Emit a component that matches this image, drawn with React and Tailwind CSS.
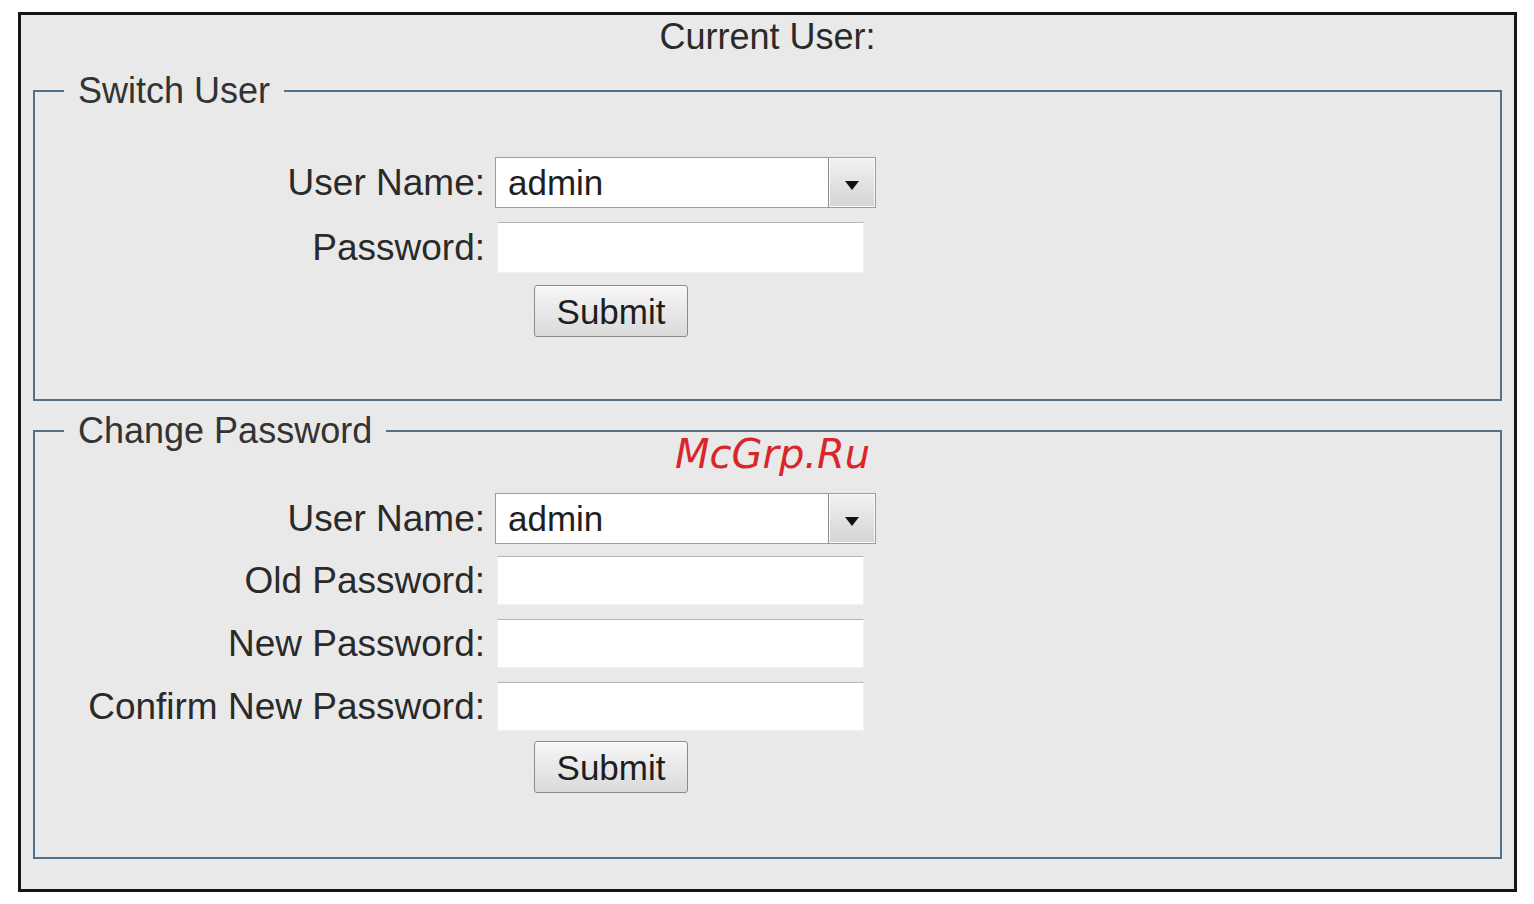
const font = { fontFamily: '"Liberation Sans", Arial, sans-serif' };

const Select = ({ value }) => (
  <div className="flex h-[51px] w-[381px] items-stretch border border-[#9c9c9c] bg-white">
    <div className="flex flex-1 items-center pl-[12px] text-[35px] leading-none text-[#1e1e1e]">{value}</div>
    <div className="flex w-[47px] items-center justify-center border-l border-[#8d8d8d] bg-gradient-to-b from-[#f2f2f2] to-[#d4d4d4] shadow-[inset_0_0_0_1px_#fafafa]">
      <svg width="18" height="11" viewBox="0 0 18 11" className="mt-[6px]">
        <path d="M2 1 L16 1 L9 10 Z" fill="#111" />
      </svg>
    </div>
  </div>
);

const TextInput = ({ h = 'h-[51px]' }) => (
  <div className={`${h} ml-[2px] w-[367px] border border-[#f1f1f1] border-t-[#b5b5b5] bg-white`} />
);

const SubmitButton = () => (
  <button className="ml-[39px] flex h-[52px] w-[154px] items-center justify-center rounded-[3px] border border-[#8b8b8b] bg-gradient-to-b from-[#f7f7f7] to-[#dadada] text-[35px] leading-none text-[#1e1e1e] shadow-[inset_0_1px_0_#ffffff]">
    Submit
  </button>
);

const Row = ({ label, children, className = '' }) => (
  <div className={`flex items-center ${className}`}>
    <label className="w-[460px] pr-[10px] text-right text-[37px] leading-none text-[#2a2a2a]">{label}</label>
    {children}
  </div>
);

const Fieldset = ({ legend, children, className = '' }) => (
  <fieldset className={`border-2 border-[#51708a] ${className}`}>
    <legend className="ml-[29px] px-[14px] text-[36px] leading-[40px] text-[#333]">{legend}</legend>
    {children}
  </fieldset>
);

export default function App() {
  return (
    <div className="relative min-h-[904px] w-[1534px] bg-white" style={font}>
      <div className="ml-[18px] w-[1499px] pt-[12px]">
        <div className="border-[3px] border-[#161616] bg-[#e9e9e9] px-[12px] pb-[30px] pt-[2px]">
          <div className="text-center text-[36px] leading-[40px] text-[#2a2a2a]">Current User:</div>

          <Fieldset legend="Switch User" className="mt-[14px] pb-[62px] pt-[46px]">
            <Row label="User Name:">
              <Select value="admin" />
            </Row>
            <Row label="Password:" className="mt-[14px]">
              <TextInput />
            </Row>
            <Row label="" className="mt-[12px]">
              <SubmitButton />
            </Row>
          </Fieldset>

          <Fieldset legend="Change Password" className="mt-[10px] pb-[64px] pt-[42px]">
            <Row label="User Name:">
              <Select value="admin" />
            </Row>
            <Row label="Old Password:" className="mt-[12px]">
              <TextInput h="h-[49px]" />
            </Row>
            <Row label="New Password:" className="mt-[14px]">
              <TextInput h="h-[49px]" />
            </Row>
            <Row label="Confirm New Password:" className="mt-[14px]">
              <TextInput h="h-[49px]" />
            </Row>
            <Row label="" className="mt-[10px]">
              <SubmitButton />
            </Row>
          </Fieldset>
        </div>
      </div>

      <div
        className="absolute left-[675px] top-[429px] text-[40px] italic leading-[50px] text-[#d8262b]"
        style={{ fontFamily: '"DejaVu Sans", sans-serif' }}
      >
        McGrp.Ru
      </div>
    </div>
  );
}
